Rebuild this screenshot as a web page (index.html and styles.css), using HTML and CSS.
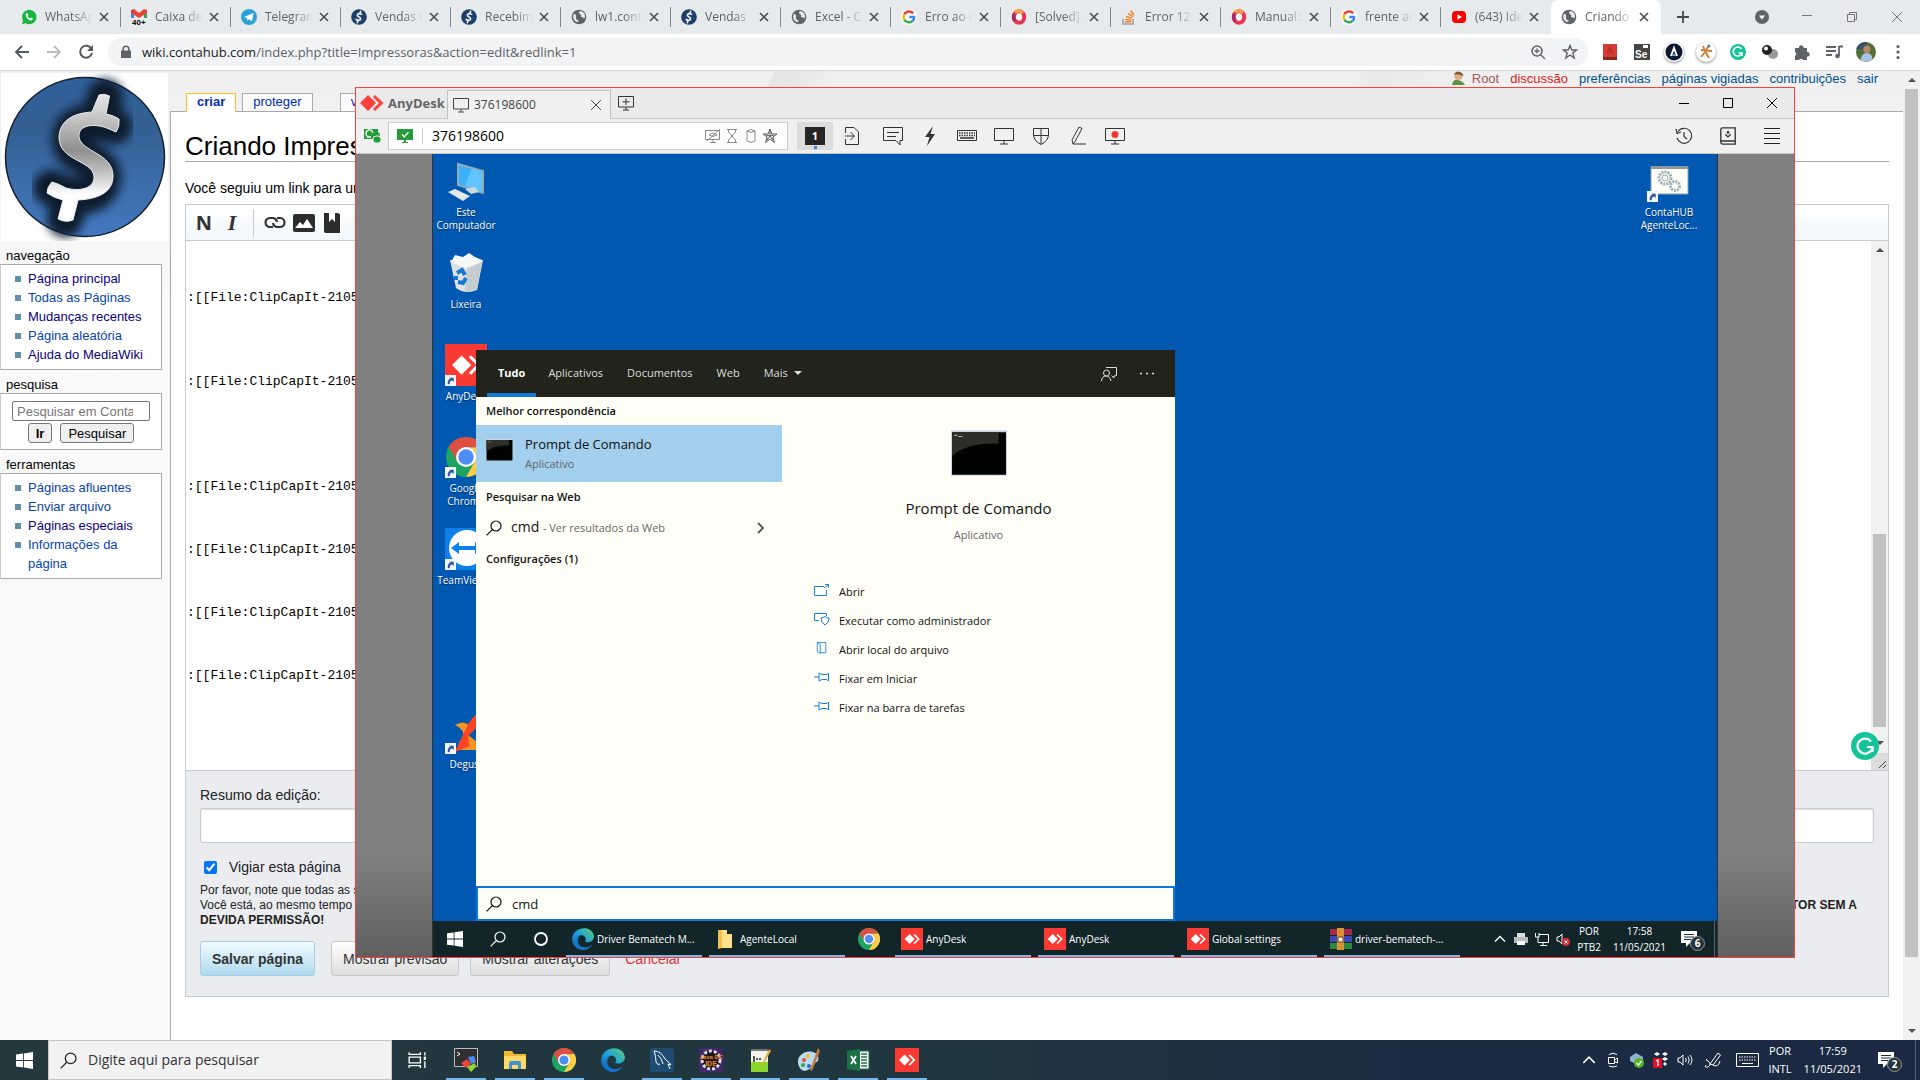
FILE: index.html
```html
<!DOCTYPE html>
<html lang="pt-BR">
<head>
<meta charset="utf-8">
<title>Criando Impressoras</title>
<link rel="stylesheet" href="styles.css">
</head>
<body>
<svg class="sprite" aria-hidden="true">
  <defs>
    <linearGradient id="coin" x1="0" y1="0" x2="0" y2="1"><stop offset="0" stop-color="#31609b"/><stop offset=".3" stop-color="#335f92"/><stop offset="1" stop-color="#4479bf"/></linearGradient>
    <linearGradient id="silver" gradientUnits="userSpaceOnUse" x1="0" y1="20" x2="0" y2="150"><stop offset="0" stop-color="#e8e8e8"/><stop offset=".2" stop-color="#c4c4c4"/><stop offset=".44" stop-color="#8f8f8f"/><stop offset=".62" stop-color="#c4c4c4"/><stop offset=".78" stop-color="#fff"/></linearGradient>
    <linearGradient id="edgeg" x1="0" y1="1" x2="1" y2="0"><stop offset="0" stop-color="#0c59a4"/><stop offset=".5" stop-color="#1b9de2"/><stop offset="1" stop-color="#5ed56b"/></linearGradient>
    <filter id="soft" x="-30%" y="-30%" width="160%" height="160%"><feGaussianBlur stdDeviation="5"/></filter>
  </defs>
  <symbol id="dollar" viewBox="0 0 167 168"><circle cx="84" cy="84" r="79.500" fill="url(#coin)" stroke="#14202e" stroke-width="1.500"/><path d="M113 53C95 47 68 46 69 68C70 88 104 84 102 106C99 127 74 126 50 115M98 44L104 24M71 122L64 146" fill="none" stroke="#0a1a2e" stroke-width="36" stroke-linecap="round" filter="url(#soft)"/><path d="M98 22Q103 20 108.500 23L105 41Q112 42 118 46Q119 53 115 59Q109 56 103 54C88 50 77 54 78 64C80 79 112 80 112 103C112 120 96 126 77 127L72 147Q65 150 57 146L62 127Q53 125 46 120Q46 114 51 109Q58 111 65 115C80 119 94 115 93 103C91 87 58 88 58 64C59 47 73 40 91 39Z" fill="url(#silver)" stroke="#eee" stroke-width="1"/></symbol>
  <symbol id="coinico" viewBox="0 0 16 16"><circle cx="8" cy="8" r="7.8" fill="#1d3f6c"/><path d="M10.6 5.2C9 4 6.3 4.5 6.4 6.3S9.8 8 9.6 9.8S6.8 11.6 5.2 10.5M9 4.6L9.6 2.4M7 11.2L6.4 13.6" fill="none" stroke="#f2f2f2" stroke-width="1.7" stroke-linecap="round"/></symbol>
  <symbol id="wa" viewBox="0 0 16 16"><path d="M1 15.3L2 11.6A7.2 7.2 0 1 1 4.7 14.3Z" fill="#19b53f"/><path d="M5 4.4C3.8 6.8 6.8 11.3 10.7 11.6L12 9.8L10 8.6L9 9.6C7.8 9 7 8 6.6 7L7.4 6L6.4 4Z" fill="#fff"/></symbol>
  <symbol id="gmail" viewBox="0 0 16 16"><path d="M0 1H3V9H0Z" fill="#4285f4"/><path d="M13 1H16V9H13Z" fill="#34a853"/><path d="M0 1L3 0L8 4L13 0L16 1V4L8 9L0 4Z" fill="#ea4335"/><text x="1" y="16" font-size="8" font-family="Liberation Sans" font-weight="700">40+</text></symbol>
  <symbol id="tg" viewBox="0 0 16 16"><circle cx="8" cy="8" r="8" fill="#2aa1da"/><path d="M3 8L12.5 4L11 12.3L8 10.2L6.4 11.6L6 9Z" fill="#fff"/></symbol>
  <symbol id="globe" viewBox="0 0 16 16"><circle cx="8" cy="8" r="7.3" fill="#5f6368"/><path d="M3 4.5Q6 6 5 8T8 12Q6 14 4 12Q1 9 3 4.5M9 2Q7 4 9 5T10 8Q13 8 13 10Q15 7 13 4Q11 2 9 2" fill="#e7eaed"/></symbol>
  <symbol id="google" viewBox="0 0 16 16"><circle cx="8" cy="8" r="8" fill="#fff"/><g fill="none" stroke-width="2.4"><path d="M12.2 4.4A5.4 5.4 0 0 0 3.2 5.6" stroke="#ea4335"/><path d="M3.2 5.6A5.4 5.4 0 0 0 3.3 10.6" stroke="#fbbc05"/><path d="M3.3 10.6A5.4 5.4 0 0 0 11.6 12" stroke="#34a853"/><path d="M11.6 12A5 5 0 0 0 13.2 8H8.2" stroke="#4285f4"/></g></symbol>
  <symbol id="ring" viewBox="0 0 16 16"><ellipse cx="8" cy="8" rx="5.2" ry="5.7" fill="#fff" stroke="#e8344e" stroke-width="4"/><path d="M4 3.5Q8 0 12 4" fill="none" stroke="#f9a13b" stroke-width="3"/><path d="M3 5Q1.500 9 4 12" fill="none" stroke="#a0286c" stroke-width="3"/></symbol>
  <symbol id="so" viewBox="0 0 16 16"><path d="M2 10V15H12V10" fill="none" stroke="#999" stroke-width="1.5"/><path d="M4 12.800H10M4.200 10.300L10.200 11.200M5 7.400L10.800 9.200M7 4.300L12 7.600M9.600 1.500L13 6.300" stroke="#f48024" stroke-width="1.500"/></symbol>
  <symbol id="yt" viewBox="0 0 16 16"><rect x="1" y="2" width="14" height="12" rx="4" fill="#f00"/><path d="M6.500 5.300L11 8L6.500 10.700Z" fill="#fff"/></symbol>
  <symbol id="x" viewBox="0 0 14 14"><path d="M3 3L11 11M11 3L3 11" stroke="currentColor" stroke-width="1.600"/></symbol>
  <symbol id="xthin" viewBox="0 0 14 14"><path d="M2 2L12 12M12 2L2 12" stroke="currentColor" stroke-width="1"/></symbol>
  <symbol id="anyd" viewBox="0 0 24 16"><path d="M0 8L8 0L16 8L8 16Z M13 2L15 0L23.500 8L15 16L13 14L19 8Z" fill="currentColor"/></symbol>
  <symbol id="anyicon" viewBox="0 0 24 24"><path d="M0 0H24V24H0Z" fill="#fb3a34"/><path d="M4 12L9.500 6.500L15 12L9.500 17.500ZM13.500 7.500L15 6.500L20.500 12L15 17.500L13.500 16.500L18 12Z" fill="#fff"/></symbol>
  <symbol id="chrome" viewBox="0 0 24 24"><circle cx="12" cy="12" r="12" fill="#1da462"/><path d="M1.600 6A12 12 0 0 1 22.400 6L12 6.500L7 15Z" fill="#dd4f43"/><path d="M22.400 6A12 12 0 0 1 12 24L17.200 15L17 8.500L12 6.500Z" fill="#ffce44"/><circle cx="12" cy="12" r="6" fill="#fff"/><circle cx="12" cy="12" r="4.600" fill="#4e8cf7"/></symbol>
  <symbol id="edge" viewBox="0 0 24 24"><path d="M0 12C1 -2 22 -4 24 9C24 15 17 17 14 14.500C17 12 14 7 9 8C3 10 5 22 15 24C6 25 0 19 0 12Z" fill="url(#edgeg)"/><path d="M9 9C3 14 8 22 15 21Q20 21 22.500 17C20 22 16 24 12 24C3 23 3 11 9 9Z" fill="#1276cf"/></symbol>
  <symbol id="win" viewBox="0 0 16 16"><path d="M0 2.300L6.700 1.400V7.600H0ZM7.500 1.300L16 0V7.600H7.500ZM0 8.400H6.700V14.600L0 13.700ZM7.500 8.400H16V16L7.500 14.700Z" fill="#fff"/></symbol>
  <symbol id="search" viewBox="0 0 16 16"><circle cx="10" cy="6" r="5" fill="none" stroke="currentColor" stroke-width="1.200"/><path d="M6.300 9.700L.600 15.400" stroke="currentColor" stroke-width="1.200"/></symbol>
  <symbol id="monitor" viewBox="0 0 16 16"><path d="M.500 1.500H15.500V12H.500ZM8 12V15M5 15H11" fill="none" stroke="currentColor"/></symbol>
  <symbol id="shortcut" viewBox="0 0 12 12"><path d="M0 0H12V12H0Z" fill="#f4f6fb"/><path d="M3 10V7Q4 4 6 4L4.500 3H9.500V8L8 6Q5 6 5 10Z" fill="#2a51a3"/></symbol>
  <symbol id="cmd" viewBox="0 0 54 44"><path d="M0 0H54V44H0Z" fill="#cdd3e4"/><path d="M1 2H53V43H1Z" fill="#000300"/><path d="M1 2H46V13Q15 12 1 25Z" fill="#2c2e27"/><path d="M3 5H6M7 6H11" stroke="#aaa"/></symbol>
  <symbol id="folder" viewBox="0 0 24 24"><path d="M1 3H9L11 6H23V21H1Z" fill="#f1b82d"/><path d="M1 8H23V21H1Z" fill="#ffd968"/><path d="M6 21V15Q6 13 8 13H16Q18 13 18 15V21H15V17H9V21Z" fill="#3b94da"/></symbol>
  <symbol id="note" viewBox="0 0 16 16"><path d="M0 0H16V12H9L5 16V12H0Z" fill="#fff"/><path d="M3 3.500H13M3 6H13M3 8.500H10" stroke="#1c2c3c"/></symbol>
  <symbol id="up" viewBox="0 0 14 14"><path d="M2 9.500L7 4.500L12 9.500" fill="none" stroke="currentColor" stroke-width="1.300"/></symbol>
  <symbol id="pin" viewBox="0 0 16 12"><path d="M0 6H5M5 2V10L8 8.500H13L14.500 10V2L13 3.500H8Z" fill="none" stroke="#1580d8"/></symbol>
</svg>

<header class="tabstrip">
  <div class="tab"><svg class="fav"><use href="#wa"/></svg><span>WhatsAp</span><button aria-label="Fechar"><svg><use href="#x"/></svg></button></div>
  <div class="tab"><svg class="fav"><use href="#gmail"/></svg><span>Caixa de</span><button aria-label="Fechar"><svg><use href="#x"/></svg></button></div>
  <div class="tab"><svg class="fav"><use href="#tg"/></svg><span>Telegram</span><button aria-label="Fechar"><svg><use href="#x"/></svg></button></div>
  <div class="tab"><svg class="fav"><use href="#coinico"/></svg><span>Vendas I</span><button aria-label="Fechar"><svg><use href="#x"/></svg></button></div>
  <div class="tab"><svg class="fav"><use href="#coinico"/></svg><span>Recebim</span><button aria-label="Fechar"><svg><use href="#x"/></svg></button></div>
  <div class="tab"><svg class="fav"><use href="#globe"/></svg><span>lw1.conta</span><button aria-label="Fechar"><svg><use href="#x"/></svg></button></div>
  <div class="tab"><svg class="fav"><use href="#coinico"/></svg><span>Vendas -</span><button aria-label="Fechar"><svg><use href="#x"/></svg></button></div>
  <div class="tab"><svg class="fav"><use href="#globe"/></svg><span>Excel - C</span><button aria-label="Fechar"><svg><use href="#x"/></svg></button></div>
  <div class="tab"><svg class="fav"><use href="#google"/></svg><span>Erro ao c</span><button aria-label="Fechar"><svg><use href="#x"/></svg></button></div>
  <div class="tab"><svg class="fav"><use href="#ring"/></svg><span>[Solved]:</span><button aria-label="Fechar"><svg><use href="#x"/></svg></button></div>
  <div class="tab"><svg class="fav"><use href="#so"/></svg><span>Error 126</span><button aria-label="Fechar"><svg><use href="#x"/></svg></button></div>
  <div class="tab"><svg class="fav"><use href="#ring"/></svg><span>Manual:S</span><button aria-label="Fechar"><svg><use href="#x"/></svg></button></div>
  <div class="tab"><svg class="fav"><use href="#google"/></svg><span>frente au</span><button aria-label="Fechar"><svg><use href="#x"/></svg></button></div>
  <div class="tab last"><svg class="fav"><use href="#yt"/></svg><span>(643) Ide</span><button aria-label="Fechar"><svg><use href="#x"/></svg></button></div>
  <div class="tab active"><svg class="fav"><use href="#globe"/></svg><span>Criando</span><button aria-label="Fechar"><svg><use href="#x"/></svg></button></div>
  <button class="newtab" aria-label="Nova guia"><svg viewBox="0 0 14 14"><path d="M7 1V13M1 7H13" stroke="#45494d" stroke-width="1.800"/></svg></button>
  <div class="winctl">
    <svg viewBox="0 0 16 16"><circle cx="8" cy="8" r="7" fill="#5f6368"/><path d="M5 6.500H11L8 10.500Z" fill="#fff"/></svg>
    <svg viewBox="0 0 16 16"><path d="M3 6.500H13" stroke="#777"/></svg>
    <svg viewBox="0 0 16 16"><path d="M3.500 5.500H10.500V12.500H3.500ZM5.500 5V3.500H12.500V10.500H11" fill="none" stroke="#777"/></svg>
    <svg viewBox="0 0 16 16"><path d="M3 3L13 13M13 3L3 13" stroke="#777"/></svg>
  </div>
</header>

<nav class="toolbar">
  <button aria-label="Voltar"><svg viewBox="0 0 16 16"><path d="M15 8H2M8 2L2 8L8 14" fill="none" stroke="#55595d" stroke-width="1.800"/></svg></button>
  <button aria-label="Avançar"><svg viewBox="0 0 16 16"><path d="M1 8H14M8 2L14 8L8 14" fill="none" stroke="#bbb" stroke-width="1.800"/></svg></button>
  <button aria-label="Recarregar"><svg viewBox="0 0 16 16"><path d="M13.500 5A6 6 0 1 0 14 9" fill="none" stroke="#55595d" stroke-width="2"/><path d="M15 1V7H9Z" fill="#55595d"/></svg></button>
  <div class="omnibox">
    <svg viewBox="0 0 12 14"><path d="M3.200 6V4A2.800 2.800 0 0 1 8.800 4V6" fill="none" stroke="#5f6368" stroke-width="1.600"/><path d="M1 5.500H11V13H1Z" fill="#5f6368"/></svg>
    <p>wiki.contahub.com<span>/index.php?title=Impressoras&amp;action=edit&amp;redlink=1</span></p>
    <svg class="om" viewBox="0 0 16 16"><circle cx="7" cy="7" r="5" fill="none" stroke="#5f6368" stroke-width="1.500"/><path d="M10.500 10.500L15 15M4.500 7H9.500M7 4.500V9.500" stroke="#5f6368" stroke-width="1.300"/></svg>
    <svg class="om" viewBox="0 0 16 16"><path d="M8 1.500L9.800 6H14.500L10.800 9L12.200 14L8 11L3.800 14L5.200 9L1.500 6H6.200Z" fill="none" stroke="#5f6368" stroke-width="1.400"/></svg>
  </div>
  <div class="exts">
    <svg viewBox="0 0 20 20"><path d="M3 2H17V18H3Z" fill="#d93a33"/><path d="M3 15H17V18H3Z" fill="#8e2521"/><path d="M7 12L10 5L13 12M8 10H12" fill="none" stroke="#b52e29" stroke-width="1.500"/></svg>
    <svg viewBox="0 0 20 20"><path d="M2 2H18V18H2Z" fill="#464646"/><path d="M11 3H16V6H11Z" fill="#fff"/><text x="3" y="16" font-size="10" font-weight="700" fill="#fff" font-family="Liberation Sans">Se</text></svg>
    <svg viewBox="0 0 20 20" class="halo"><circle cx="10" cy="10" r="8.500" fill="#0f1630"/><path d="M7 14L10 6L13 14" fill="none" stroke="#fff" stroke-width="2"/><path d="M8 13H12" stroke="#4ea7e8" stroke-width="2"/></svg>
    <svg viewBox="0 0 20 20" class="halo"><path d="M13 3L9 10L5 15M5 8L16 9M9 9L13 16M7 4L9 9" fill="none" stroke="#c97c33" stroke-width="1.800"/><circle cx="13" cy="4" r="1.500" fill="#5a7fb5"/></svg>
    <svg viewBox="0 0 20 20"><circle cx="10" cy="10" r="8" fill="#15c39a"/><path d="M13.500 7A4.500 4.500 0 1 0 14 11H10.500M14 11V14" fill="none" stroke="#fff" stroke-width="1.600"/></svg>
    <svg viewBox="0 0 20 20"><circle cx="13" cy="12" r="5" fill="#999"/><circle cx="7" cy="8" r="5" fill="#222"/><circle cx="6" cy="6.500" r="2" fill="#fff"/></svg>
    <svg viewBox="0 0 20 20"><path d="M3 6H7A2.300 2.300 0 1 1 11.500 6H15V10A2.300 2.300 0 1 1 15 14.500V18H11A2.300 2.300 0 0 0 7 18H3V14A2.300 2.300 0 0 0 3 10Z" fill="#5f6368"/></svg>
    <svg viewBox="0 0 20 20"><path d="M2 5H12M2 9H12M2 13H8M15 4V14M15 4.500H19" fill="none" stroke="#5f6368" stroke-width="1.800"/><circle cx="13.500" cy="14" r="2.300" fill="#5f6368"/></svg>
    <svg viewBox="0 0 22 22" class="avatar"><circle cx="11" cy="11" r="11" fill="#53703a"/><path d="M0 8A11 11 0 0 1 12 0L9 8Z" fill="#39506e"/><circle cx="12" cy="8" r="4" fill="#b98768"/><path d="M5 20Q6 12 12 12T18 19Q12 24 5 20" fill="#a9c4e8"/></svg>
    <svg viewBox="0 0 20 20"><circle cx="10" cy="4.500" r="1.600" fill="#5f6368"/><circle cx="10" cy="10" r="1.600" fill="#5f6368"/><circle cx="10" cy="15.500" r="1.600" fill="#5f6368"/></svg>
  </div>
</nav>

<main class="page">
  <aside class="side">
    <a href="#" class="logo" aria-label="Página principal"><svg><use href="#dollar"/></svg></a>
    <h3>navegação</h3>
    <ul>
      <li><a class="seen" href="#">Página principal</a></li>
      <li><a href="#">Todas as Páginas</a></li>
      <li><a class="seen" href="#">Mudanças recentes</a></li>
      <li><a href="#">Página aleatória</a></li>
      <li><a class="seen" href="#">Ajuda do MediaWiki</a></li>
    </ul>
    <h3><label for="q">pesquisa</label></h3>
    <form class="find"><input id="q" placeholder="Pesquisar em Conta"><div><button type="button"><b>Ir</b></button><button type="button">Pesquisar</button></div></form>
    <h3>ferramentas</h3>
    <ul>
      <li><a href="#">Páginas afluentes</a></li>
      <li><a href="#">Enviar arquivo</a></li>
      <li><a class="seen" href="#">Páginas especiais</a></li>
      <li><a href="#">Informações da página</a></li>
    </ul>
  </aside>

  <section class="col">
    <div class="colhead">
      <div class="ptabs"><a href="#" class="sel">criar</a><a href="#">proteger</a><a href="#" class="far">vigiar</a></div>
      <div class="personal">
        <svg viewBox="0 0 13 15"><path d="M0 14Q1 8 6 9T13 14Z" fill="#5b9440"/><circle cx="6.500" cy="5" r="4" fill="#e0b083"/><path d="M2 4Q4 -1 8 1T11 5Q6 2 2 4" fill="#7a5a32"/></svg>
        <a href="#" class="root">Root</a><a href="#" class="new">discussão</a><a href="#">preferências</a><a href="#">páginas vigiadas</a><a href="#">contribuições</a><a href="#">sair</a>
      </div>
    </div>
    <article class="content">
      <h1>Criando Impressoras</h1>
      <p class="intro">Você seguiu um link para uma</p>
      <div class="editor">
        <div class="edbar">
          <button class="bold" aria-label="Negrito">N</button><button class="ital" aria-label="Itálico">I</button><i class="sep"></i>
          <svg viewBox="0 0 22 20"><path d="M9 14H6A4.500 4.500 0 0 1 6 5H9A4.500 4.500 0 0 1 13 9M13 5H16A4.500 4.500 0 0 1 16 14H13A4.500 4.500 0 0 1 9 10" fill="none" stroke="#333" stroke-width="2.200"/></svg>
          <svg viewBox="0 0 22 20"><rect y="1" width="22" height="18" rx="2" fill="#2d2d2d"/><path d="M2 15L7 9L10 12L14 6L20 15Z" fill="#fff"/></svg>
          <svg viewBox="0 0 22 20"><path d="M2 0Q3 0 7 0V9L10 6L13 9V0H15Q18 0 18 2V20H4Q2 20 2 18Z" fill="#2d2d2d"/></svg>
        </div>
        <div class="area">
          <textarea rows="25" aria-label="Texto da página">


:[[File:ClipCapIt-2105



:[[File:ClipCapIt-2105




:[[File:ClipCapIt-2105


:[[File:ClipCapIt-2105


:[[File:ClipCapIt-2105


:[[File:ClipCapIt-2105


</textarea>
          <div class="scroll inner"><i class="ar up"></i><i class="thumb"></i><i class="ar dn"></i><svg viewBox="0 0 17 17"><path d="M0 0H17V17H0Z" fill="#dcdcdc"/><path d="M8 15L15 8M12 15L15 12" stroke="#444"/></svg></div>
          <svg class="gram" viewBox="0 0 28 28"><circle cx="14" cy="14" r="14" fill="#15c39a"/><path d="M20 9.500A7.500 7.500 0 1 0 21.500 15H16M21.500 15V20" fill="none" stroke="#fff" stroke-width="2.200"/></svg>
        </div>
        <div class="options">
          <label for="sum">Resumo da edição:</label>
          <input id="sum" class="sum">
          <label class="watch"><input type="checkbox" checked>Vigiar esta página</label>
          <div class="legal">
            <p>Por favor, note que todas as suas</p>
            <p class="spread"><span>Você está, ao mesmo tempo</span><b>TOR SEM A</b></p>
            <p><b>DEVIDA PERMISSÃO!</b></p>
          </div>
          <div class="acts"><button class="save">Salvar página</button><button class="second">Mostrar previsão</button><button>Mostrar alterações</button><a href="#">Cancelar</a></div>
        </div>
      </div>
    </article>
  </section>
  <div class="scroll outer"><i class="ar up"></i><i class="thumb"></i><i class="ar dn"></i></div>

  <section class="anydesk" aria-label="AnyDesk">
    <div class="adtitle">
      <div class="brand"><svg><use href="#anyd"/></svg><b>AnyDesk</b></div>
      <div class="adtab"><svg><use href="#monitor"/></svg><span>376198600</span><button aria-label="Fechar sessão"><svg><use href="#xthin"/></svg></button></div>
      <button class="adnew" aria-label="Nova sessão"><svg viewBox="0 0 16 16"><path d="M.500 1.500H15.500V12H.500ZM8 12V15M5 15H11M8 3.500V10M4.500 6.800H11.500" fill="none" stroke="#333"/></svg></button>
      <div class="adctl">
        <button aria-label="Minimizar"><svg viewBox="0 0 14 14"><path d="M2 7.500H12" stroke="#000"/></svg></button>
        <button aria-label="Maximizar"><svg viewBox="0 0 14 14"><path d="M2.500 2.500H11.500V11.500H2.500Z" fill="none" stroke="#000"/></svg></button>
        <button aria-label="Fechar"><svg><use href="#xthin"/></svg></button>
      </div>
    </div>
    <div class="adbar">
      <svg class="lock" viewBox="0 0 18 16"><path d="M0 1H14V11H0Z" fill="#259b3e"/><path d="M3 8A3 3 0 0 1 8 3L9 5M7 9L3 9" fill="none" stroke="#fff" stroke-width="1.300"/><rect x="9" y="8" width="8" height="7" rx="3" fill="#259b3e" stroke="#eee"/><path d="M11 8V6Q13 3 15 6V8" fill="none" stroke="#259b3e" stroke-width="1.500"/></svg>
      <div class="addr">
        <svg viewBox="0 0 16 16"><path d="M0 1H16V12H0ZM7 12H9V14H11V15H5V14H7Z" fill="#259b3e"/><path d="M5 6.500L7.200 8.700L11.500 4.300" fill="none" stroke="#fff" stroke-width="1.400"/></svg>
        <i></i><input value="376198600" aria-label="Endereço remoto">
        <svg viewBox="0 0 16 16"><path d="M.500 2.500H14.500V11.500H.500ZM8 12V14M5 14.500H11M2 13L15 1M4 7Q8 3 12 7Q8 10 4 7" fill="none" stroke="#888"/></svg>
        <svg viewBox="0 0 16 16"><path d="M3 1.500H13M3 14.500H13M4.500 2V4L8 8L11.500 4V2M4.500 14V12L8 8L11.500 12V14" fill="none" stroke="#888"/></svg>
        <svg viewBox="0 0 16 16"><path d="M4 3Q8 0 12 3V13Q8 16 4 13ZM4 3Q8 6 12 3" fill="none" stroke="#888"/></svg>
        <svg viewBox="0 0 16 16"><path d="M8 1L9.800 6H15L10.800 9L12.400 14.500L8 11L3.600 14.500L5.200 9L1 6H6.200ZM8 8V3M8 8L12 7M8 8L11 12M8 8L5 12M8 8L4 7" fill="none" stroke="#555"/></svg>
      </div>
      <div class="adtools">
        <button class="on">1</button>
        <button aria-label="Arquivos"><svg viewBox="0 0 20 20"><path d="M3.500 7V1.500H12L16.500 6V18.500H3.500V13M3 10H12M8.500 6L12.500 10L8.500 14" fill="none" stroke="#333"/></svg></button>
        <button class="chat" aria-label="Chat"><svg viewBox="0 0 20 20"><path d="M.500 1.500H19.500V14.500H17V19L13 14.500H.500ZM4 6.500H16M4 10.500H13" fill="none" stroke="#333"/></svg></button>
        <button aria-label="Ações"><svg viewBox="0 0 20 20"><path d="M13 0L5 11H9.500L7 20L15 8H10.500Z" fill="#333"/></svg></button>
        <button aria-label="Teclado"><svg viewBox="0 0 20 20"><path d="M.500 4.500H19.500V14.500H.500Z" fill="none" stroke="#333"/><path d="M2 7H18M2 9.500H18" stroke="#333" stroke-width="1.500" stroke-dasharray="1.500 1"/><path d="M3 12H17" stroke="#333" stroke-width="1.500"/></svg></button>
        <button aria-label="Tela"><svg viewBox="0 0 20 20"><path d="M.500 2.500H19.500V14.500H.500ZM10 14.500V18M6 18H14" fill="none" stroke="#333"/></svg></button>
        <button aria-label="Permissões"><svg viewBox="0 0 20 20"><path d="M2.500 2.500H17.500V9Q17 15 10 18.500Q3 15 2.500 9ZM10 2.500V18M2.500 9.500H17.500" fill="none" stroke="#333"/></svg></button>
        <button aria-label="Quadro"><svg viewBox="0 0 20 20"><path d="M5 18L4 14L11 1L14 2.500L7 15.500ZM5 18H18" fill="none" stroke="#333"/></svg></button>
        <button aria-label="Gravar"><svg viewBox="0 0 20 20"><path d="M.500 2.500H19.500V14.500H.500ZM10 14.500V18M6 18H14" fill="none" stroke="#333"/><circle cx="10" cy="8.500" r="3.500" fill="#ea3a35"/></svg></button>
      </div>
      <div class="adctl">
        <button aria-label="Histórico"><svg viewBox="0 0 18 18"><path d="M3 4.500A7.500 7.500 0 1 1 2 11M1 2L2 6.500L6 5M9 5V9.500L12 12" fill="none" stroke="#333" stroke-width="1.200"/></svg></button>
        <button aria-label="Agenda"><svg viewBox="0 0 18 20"><path d="M3 1H17V19H3Q1 19 1 17V3Q1 1 3 1M1 15.500H17M6 8L9 11L12 8" fill="none" stroke="#333" stroke-width="1.500"/><circle cx="9" cy="6" r="1.500" fill="#333"/></svg></button>
        <button aria-label="Menu"><svg viewBox="0 0 18 18"><path d="M1 1.500H17M1 6.500H17M1 11.500H17M1 16.500H17" stroke="#222"/></svg></button>
      </div>
    </div>
    <div class="stage">
      <div class="remote">
        <div class="desk">
          <div class="icons">
            <div class="ico"><svg viewBox="0 0 42 42"><path d="M13 4L38 11V33L13 25Z" fill="#3bb0fb" stroke="#93a9b8" stroke-width="2"/><path d="M27 8L37 12V32L20 26Z" fill="#62c5ff"/><path d="M3 32L10 29L25 36L18 41Z" fill="#e3e8ea"/><path d="M20 29L30 27L34 32L26 34Z" fill="#cdd8dc"/></svg><span>Este Computador</span></div>
            <div class="ico"><svg viewBox="0 0 42 42"><path d="M5 8L38 8L32 38Q20 43 11 36Z" fill="#dfe3e4"/><path d="M6 10L10 3L18 5L24 1L30 5L37 8L33 14L20 16Z" fill="#f6f7f7"/><path d="M22 16L20 40L32 37L37 10Z" fill="#c5cdd0"/><path d="M12 21L17 18L20 23M21 26L18 31L13 30M11 28L11 24" fill="none" stroke="#1678d2" stroke-width="4"/></svg><span>Lixeira</span></div>
            <div class="ico"><svg viewBox="0 0 42 42"><use href="#anyicon"/></svg><svg class="sc"><use href="#shortcut"/></svg><span>AnyDesk</span></div>
            <div class="ico"><svg viewBox="0 0 42 42"><use href="#chrome" x="1" y="1" width="40" height="40"/></svg><svg class="sc"><use href="#shortcut"/></svg><span>Google Chrome</span></div>
            <div class="ico"><svg viewBox="0 0 42 42"><path d="M0 0H42V42H0Z" fill="#0d7fe8"/><circle cx="22" cy="20" r="18" fill="#fff"/><path d="M6 20L14 14V18H30V14L38 20L30 26V22H14V26Z" fill="#0d7fe8"/></svg><svg class="sc"><use href="#shortcut"/></svg><span>TeamViewer</span></div>
            <div class="ico"></div>
            <div class="ico"><svg viewBox="0 0 42 42"><path d="M10 13Q18 8 24 13L22 22Q32 30 42 38H14Q20 28 18 20Q15 15 10 13" fill="#f79320"/><path d="M34 0Q24 8 21 17Q14 30 10 40L25 34Q22 28 24 23Q34 16 36 0Z" fill="#fb4523"/></svg><svg class="sc"><use href="#shortcut"/></svg><span>Degust</span></div>
          </div>
          <div class="icons right">
            <div class="ico"><svg viewBox="0 0 42 42"><path d="M3 7H40V34H3Z" fill="#fdfdf8" stroke="#8da0aa"/><path d="M3 6H40V9H3Z" fill="#8e999f"/><g fill="none" stroke="#9fb0b4"><circle cx="17" cy="18" r="6" stroke-width="3" stroke-dasharray="2 1"/><circle cx="17" cy="18" r="3"/><circle cx="27" cy="26" r="4.500" stroke-width="3" stroke-dasharray="2 1"/></g></svg><svg class="sc"><use href="#shortcut"/></svg><span>ContaHUB AgenteLoc...</span></div>
          </div>
          <div class="start">
            <div class="sthead">
              <a href="#" class="cur">Tudo</a><a href="#">Aplicativos</a><a href="#">Documentos</a><a href="#">Web</a><a href="#">Mais <i></i></a>
              <svg class="fb" viewBox="0 0 16 16"><path d="M5 1.500H15.500V9.500L13 10V12L10.500 9.500M.500 15Q1 10 5 10T10 15" fill="none" stroke="#ddd"/><circle cx="5.500" cy="7" r="3" fill="none" stroke="#ddd"/></svg>
              <svg viewBox="0 0 16 16"><path d="M1 7.500H3M7 7.500H9M13 7.500H15" stroke="#ddd" stroke-width="1.500"/></svg>
            </div>
            <div class="stbody">
              <div class="res">
                <h4>Melhor correspondência</h4>
                <div class="hit"><svg><use href="#cmd"/></svg><div><p>Prompt de Comando</p><small>Aplicativo</small></div></div>
                <h4 class="web">Pesquisar na Web</h4>
                <div class="webrow"><svg><use href="#search"/></svg><p>cmd <small>- Ver resultados da Web</small></p><svg class="chev" viewBox="0 0 12 12"><path d="M4 1L9 6L4 11" fill="none" stroke="#555" stroke-width="1.800"/></svg></div>
                <h4>Configurações (1)</h4>
              </div>
              <div class="detail">
                <svg class="big"><use href="#cmd"/></svg>
                <h2>Prompt de Comando</h2><small>Aplicativo</small>
                <ul>
                  <li><svg viewBox="0 0 16 12"><path d="M10 2.500H.500V11.500H12.500V6M10 4L14.500 .500M11 .500H14.500V4" fill="none" stroke="#1580d8"/></svg>Abrir</li>
                  <li><svg viewBox="0 0 16 12"><path d="M5 7.500H.500V.500H12.500V3M7 5Q9 5 11 3.500Q13 5 15 5Q15 10 11 12Q7 10 7 5" fill="none" stroke="#1580d8"/></svg>Executar como administrador</li>
                  <li><svg viewBox="0 0 16 14"><path d="M2.500 .500H12.500V12.500H6M2.500 .500L6 3V13.500L2.500 11Z" fill="none" stroke="#1580d8"/></svg>Abrir local do arquivo</li>
                  <li><svg><use href="#pin"/></svg>Fixar em Iniciar</li>
                  <li><svg><use href="#pin"/></svg>Fixar na barra de tarefas</li>
                </ul>
              </div>
            </div>
            <div class="stsearch"><svg><use href="#search"/></svg><input value="cmd" aria-label="Pesquisar"></div>
          </div>
        </div>
        <div class="rbar">
          <span class="rb"><svg><use href="#win"/></svg></span><span class="rb"><svg><use href="#search"/></svg></span><span class="rb"><svg viewBox="0 0 16 16"><circle cx="8" cy="8" r="6" fill="none" stroke="#fff" stroke-width="1.800"/></svg></span>
          <div class="task run"><svg><use href="#edge"/></svg>Driver Bematech M...</div>
          <div class="task run"><svg viewBox="0 0 22 22"><path d="M3 2H12V6H17V20H3Z" fill="#ffe08a"/><path d="M3 2H7V20L3 21Z" fill="#f2c14a"/></svg>AgenteLocal</div>
          <div class="solo"><svg><use href="#chrome"/></svg></div>
          <div class="task run"><svg><use href="#anyicon"/></svg>AnyDesk</div>
          <div class="task run"><svg><use href="#anyicon"/></svg>AnyDesk</div>
          <div class="task run"><svg><use href="#anyicon"/></svg>Global settings</div>
          <div class="task run"><svg viewBox="0 0 22 22"><path d="M0 1H22V7H0Z" fill="#a8284c"/><path d="M0 8H22V14H0Z" fill="#3a49b5"/><path d="M0 15H22V21H0Z" fill="#2e8a3b"/><path d="M7 0H14V22H7Z" fill="#d8932e"/><path d="M8 9H13V14H8Z" fill="#eee" stroke="#6b4210"/></svg>driver-bematech-...</div>
          <div class="rtray">
            <svg><use href="#up"/></svg>
            <svg viewBox="0 0 14 14"><path d="M3 1H11V5H3Z" fill="#ddd"/><path d="M0 5H14V11H0Z" fill="#b8bcbe"/><path d="M3 9H11V13H3Z" fill="#fff"/></svg>
            <svg viewBox="0 0 14 14"><path d="M4 2.500H13.500V10.500H3V5M8 10.500V13M5 13.500H12M.500 1V5H4V1" fill="none" stroke="#fff"/></svg>
            <svg viewBox="0 0 14 14"><path d="M1 5H3L6 2V12L3 9H1Z" fill="none" stroke="#fff"/><circle cx="10" cy="10" r="4" fill="#d32f3b"/><path d="M8.500 8.500L11.500 11.500M11.500 8.500L8.500 11.500" stroke="#fff"/></svg>
            <p>POR<br>PTB2</p><p>17:58<br>11/05/2021</p>
            <span class="notif"><svg><use href="#note"/></svg><b>6</b></span>
          </div>
        </div>
      </div>
    </div>
  </section>
</main>

<footer class="taskbar">
  <button class="startbtn" aria-label="Iniciar"><svg><use href="#win"/></svg></button>
  <div class="hsearch"><svg><use href="#search"/></svg><input placeholder="Digite aqui para pesquisar" aria-label="Pesquisar"></div>
  <div class="apps">
    <span class="app"><svg class="sm" viewBox="0 0 16 16"><path d="M1 1V3H11V1M1 15V13H11V15M1 5.500H11V10.500H1ZM15 1V4M15 9V15" fill="none" stroke="#fff" stroke-width="1.200"/><path d="M14 5H16V8H14Z" fill="#fff"/></svg></span>
    <span class="app run"><svg viewBox="0 0 24 24"><path d="M.500 .500H23.500V18.500H.500Z" fill="#302f31" stroke="#bbb"/><path d="M3 4L6 6L3 8" fill="none" stroke="#fff"/><path d="M7 15L13 11L17 16L12 20Z" fill="#ea4440"/><path d="M14 9L20 8L22 14L17 16Z" fill="#4b8df0"/><path d="M13 19L21 15L22 19L17 24Z" fill="#93d42d"/></svg></span>
    <span class="app run"><svg><use href="#folder"/></svg></span>
    <span class="app run"><svg><use href="#chrome"/></svg></span>
    <span class="app"><svg><use href="#edge"/></svg></span>
    <span class="app run"><svg viewBox="0 0 24 24"><rect width="24" height="24" rx="3" fill="#1f4c73"/><path d="M4 3Q11 3 15 11Q20 15 21 17L18 16L20 21M4 3Q6 8 6 14Q8 18 10 16M8 7Q12 11 13 16" fill="none" stroke="#fff"/></svg></span>
    <span class="app run"><svg viewBox="0 0 24 24"><path d="M0 0H24V24H0Z" fill="#43286b"/><circle cx="12" cy="12" r="9" fill="#1b1722" stroke="#ddd" stroke-width="3" stroke-dasharray="3 2"/><text x="12" y="11" text-anchor="middle" font-size="6" font-weight="700" fill="#f28a1c" font-family="Liberation Sans">Java EE</text><text x="12" y="18" text-anchor="middle" font-size="7" font-weight="700" fill="#f28a1c" font-family="Liberation Sans">IDE</text></svg></span>
    <span class="app run"><svg viewBox="0 0 24 24"><path d="M3 1H20V24H3Z" fill="#f4f6ee"/><path d="M3 14H20V24H3Z" fill="#8bd62c"/><path d="M3 1H20V3H3Z" fill="#777"/><path d="M6 8V14M8 11H10M11 11H13" stroke="#222" stroke-width="1.500"/><path d="M21 1L23 3L15 17L13 18Z" fill="#e7ad38"/></svg></span>
    <span class="app run"><svg viewBox="0 0 24 24"><path d="M1 15C0 7 9 2 16 4Q23 6 21 13Q18 14 17 17T8 23Q2 22 1 15Z" fill="#b9dcf0"/><circle cx="7" cy="12" r="2" fill="#e64b3b"/><circle cx="11" cy="8" r="2" fill="#f4ba32"/><circle cx="6" cy="17" r="2" fill="#3c9e46"/><circle cx="12" cy="18" r="2" fill="#3465c5"/><path d="M21 0L23 3L15 23L13 22Z" fill="#c77a3a"/></svg></span>
    <span class="app run"><svg viewBox="0 0 24 24"><path d="M13 3H23V21H13Z" fill="#fff" stroke="#1e7145"/><path d="M15 6H21M15 9H21M15 12H21M15 15H21M15 18H21" stroke="#1e7145" stroke-width="1.500"/><path d="M1 3L14 1V23L1 21Z" fill="#1e7145"/><path d="M5 8L10 16M10 8L5 16" stroke="#fff" stroke-width="1.800"/></svg></span>
    <span class="app run"><svg><use href="#anyicon"/></svg></span>
  </div>
  <div class="htray">
    <svg><use href="#up"/></svg>
    <svg viewBox="0 0 16 16"><path d="M3.500 5.500H9.500V11.500H3.500ZM9.500 8L12.500 6V11L9.500 9.500M4 2.500Q8 0 12 2.500M4 14Q8 16 12 14" fill="none" stroke="#fff"/></svg>
    <svg viewBox="0 0 16 16"><path d="M1 5L7 1L14 5V9L7 12L1 9Z" fill="#8fb3d4"/><circle cx="10" cy="11" r="5" fill="#54b522"/><path d="M7.500 11L9.500 13L12.500 9" fill="none" stroke="#fff" stroke-width="1.300"/></svg>
    <svg viewBox="0 0 16 16"><path d="M4 0L7 2L4 4L1 2ZM12 0L15 2L12 4L9 2ZM12 5L15 7L12 9L9 7ZM12 10L14 12L12 14L10 12Z" fill="#fff"/><path d="M0 6H9V16H0Z" fill="#e0102c"/><path d="M3 9L5 8V14" fill="none" stroke="#fff" stroke-width="1.300"/></svg>
    <svg viewBox="0 0 16 16"><path d="M1 6H3L6 3V13L3 10H1ZM8.500 6Q10 8 8.500 10M11 4.500Q13.500 8 11 11.500M13 3Q17 8 13 13" fill="none" stroke="#fff"/></svg>
    <svg class="w" viewBox="0 0 18 18"><path d="M2 14Q0 17 4 16Q8 13 4 10Q1 9 3 8M6 13L14 2L16.500 4L9 14ZM9 14Q14 17 16 10" fill="none" stroke="#fff"/></svg>
    <svg class="kb" viewBox="0 0 23 14"><path d="M.500 .500H22.500V13.500H.500Z" fill="none" stroke="#fff"/><path d="M3 4H20M3 7H20" stroke="#fff" stroke-dasharray="1.500 1"/><path d="M6 10.500H17" stroke="#fff"/></svg>
    <p>POR<br>INTL</p><p>17:59<br>11/05/2021</p>
    <span class="notif"><svg><use href="#note"/></svg><b>2</b></span>
  </div>
</footer>
</body>
</html>
```
FILE: styles.css
```css
* { box-sizing: border-box; }
html, body { height: 100%; margin: 0; }
body { display: flex; flex-direction: column; overflow: hidden; font: 14px/20px "Liberation Sans", Arial, sans-serif; color: #000; background: #fff; }
h1, h2, h3, h4, p, ul { margin: 0; padding: 0; font-weight: 400; }
ul { list-style: none; }
svg { display: block; flex: none; }
a { color: #0645ad; text-decoration: none; }
button { margin: 0; padding: 0; border: 0; background: none; color: inherit; font: inherit; display: flex; align-items: center; justify-content: center; flex: none; }
input, textarea { font: inherit; color: inherit; outline: 0; }
.sprite { position: absolute; width: 0; height: 0; }

/* browser */
.tabstrip, .toolbar { flex: none; display: flex; align-items: center; font-family: "Open Sans", "Noto Sans", sans-serif; }
.tabstrip { height: 34px; padding-left: 11px; background: #e7eaed; font-size: 12px; color: #5f6368; }
.tab { position: relative; flex: 0 1 110px; height: 34px; display: flex; align-items: center; padding-left: 10px; }
.tab::after { content: ""; position: absolute; right: 0; width: 1px; height: 20px; background: #84888c; }
.tab.last::after, .tab.active::after { display: none; }
.tab.active { background: #fff; border-radius: 8px 8px 0 0; }
.tab span { width: 48px; margin-left: 8px; overflow: hidden; white-space: nowrap; mask-image: linear-gradient(90deg, #000 60%, transparent); }
.tab button { margin-left: 4px; color: #4b4f53; }
.tab button svg { width: 14px; height: 14px; }
.fav { width: 16px; height: 16px; }
.newtab { margin-left: 15px; }
.newtab svg { width: 14px; height: 14px; }
.winctl { margin-left: auto; margin-right: 15px; display: flex; gap: 29px; }
.winctl svg { width: 16px; height: 16px; }
.toolbar { height: 37px; padding: 0 12px 0 14px; gap: 16px; border-bottom: 1px solid #d5d7da; background: #fff; }
.toolbar button svg { width: 16px; height: 16px; }
.omnibox { flex: 1; height: 28px; margin-left: -2px; padding: 0 10px 0 12px; display: flex; align-items: center; gap: 16px; border-radius: 14px; background: #f1f3f4; color: #202124; }
.omnibox > svg:first-child { width: 12px; height: 14px; margin-right: -6px; }
.omnibox p { flex: 1; font-size: 13px; }
.omnibox span { color: #5f6368; }
.om { width: 16px; height: 16px; }
.exts { display: flex; align-items: center; gap: 12px; margin-left: -4px; }
.exts svg { width: 20px; height: 20px; }
.exts .halo { border-radius: 50%; box-shadow: 0 1px 3px #888; }

/* wiki page */
.page { position: relative; flex: 1; min-height: 0; display: flex; background: linear-gradient(115deg, transparent 40%, #e6e6e6 40% 41%, transparent 43% 70%, #e9e9e9 71%, transparent 76%) 0 0 / 100% 40px no-repeat, linear-gradient(#efefef, #f9f9f9 240px); }
.side { width: 170px; flex: none; padding-top: 2px; font-size: 13px; line-height: 19px; }
.logo { display: block; width: 167px; height: 168px; margin: 0 0 7px 1px; background: #fff; }
.logo svg { width: 167px; height: 168px; }
.side h3 { margin-left: 6px; font-size: 13px; line-height: 16px; }
.side ul, .find { width: 162px; margin-bottom: 7px; border: 1px solid #aaa; border-left-color: #ccc; background: #fff; }
.side ul { padding: 4px 8px 5px 27px; }
.side li { position: relative; }
.side li::before { content: ""; position: absolute; left: -13px; top: 7px; width: 6px; height: 6px; background: #648fa3; }
.seen { color: #0b0080; }
.find { padding: 7px 11px 6px; }
.find input { display: block; width: 138px; height: 20px; padding: 0 16px 0 4px; border: 1px solid #767676; border-radius: 2px; }
.find div { display: flex; justify-content: center; gap: 8px; margin-top: 2px; }
.find button { height: 20px; padding: 0 7px; border: 1px solid #767676; border-radius: 3px; background: #efefef; }
.col { flex: 1; min-width: 0; display: flex; flex-direction: column; }
.colhead { height: 40px; flex: none; display: flex; justify-content: space-between; font-size: 13px; }
.ptabs { display: flex; align-self: flex-end; gap: 6px; padding-left: 16px; }
.ptabs a { height: 18px; padding: 0 10px; line-height: 15px; border: 1px solid #aaa; border-bottom: 0; background: #fbfbfb; color: #002bb8; }
.ptabs .sel { height: 19px; margin-bottom: -1px; border-color: #fabd23; background: #fff; font-weight: 700; z-index: 1; }
.ptabs .far { margin-left: 21px; }
.personal { display: flex; gap: 11px; padding-right: 25px; line-height: 16px; }
.personal svg { width: 13px; height: 15px; margin-right: -4px; }
.personal a { color: #00518f; }
.personal .root { color: #a55858; }
.personal .new { color: #e02020; }
.content { flex: 1; padding: 20px 14px 0; border: 1px solid #aaa; border-width: 1px 0 0 1px; background: #fff; }
h1 { font-size: 26px; line-height: 29px; border-bottom: 1px solid #a2a9b1; }
.intro { margin: 16px 0 6px; }
.editor { border: 1px solid #c8ccd1; }
.edbar { height: 36px; display: flex; align-items: center; border-bottom: 1px solid #c8ccd1; background: linear-gradient(#fff, #f1f7fb); color: #333; }
.edbar svg { width: 22px; height: 20px; margin-right: 7px; }
.bold { width: 36px; font: 700 20px "Open Sans", sans-serif; }
.ital { width: 20px; font: italic 700 22px "Liberation Serif", serif; }
.sep { width: 1px; height: 28px; margin: 0 10px 0 11px; background: #c8ccd1; }
.area { position: relative; display: flex; border-bottom: 1px solid #c8ccd1; }
textarea { flex: 1; display: block; padding: 4px 1px 0; border: 0; resize: none; overflow: hidden; font: 13px/21px "Liberation Mono", "DejaVu Sans Mono", monospace; }
.gram { position: absolute; right: 9px; bottom: 10px; width: 28px; height: 28px; }
.scroll { width: 17px; flex: none; background: #f1f1f1; display: flex; flex-direction: column; align-items: center; }
.scroll .ar { margin: 7px 0; border: 4px solid transparent; border-width: 0 4px; height: 4px; }
.scroll .up { border-bottom: 4px solid #505050; }
.scroll .dn { border-top: 4px solid #505050; }
.thumb { width: 13px; background: #c1c1c1; }
.outer .thumb { flex: 0 1 868px; margin-bottom: auto; }
.inner .thumb { flex: 0 0 193px; margin-top: auto; }
.inner .dn { margin: 14px 0 8px; }
.inner svg { width: 17px; height: 17px; }
.options { display: flex; flex-direction: column; padding: 14px 14px 20px; background: #eaecf0; color: #222; }
.sum { height: 35px; margin: 3px 0 14px; border: 1px solid #c8ccd1; border-radius: 2px; background: #fff; box-shadow: inset 0 1px 2px #ddd; }
.watch { display: flex; align-items: center; gap: 12px; line-height: 20px; }
.watch input { width: 13px; height: 13px; margin: 0 0 0 4px; accent-color: #0075ff; }
.legal { margin-top: 6px; font-size: 12px; line-height: 15px; }
.spread { display: flex; justify-content: space-between; padding-right: 17px; }
.acts { display: flex; align-items: center; margin-top: 13px; }
.acts button { height: 35px; margin-right: 11px; padding: 0 11px; border: 1px solid #c9c9c9; border-radius: 3px; background: linear-gradient(#fff, #ddd); color: #333; }
.acts .save { margin-right: 16px; border-color: #a6cee1; background: linear-gradient(#f0fbff, #b0daef); font-weight: 700; }
.acts a { margin-left: 4px; color: #d33; }

/* remote session window */
.anydesk { position: absolute; left: 355px; top: 16px; right: 125px; bottom: 82px; display: flex; flex-direction: column; border: 1px solid #f8413a; background: #f0f0f0; font: 12px/16px "Open Sans", "Noto Sans", sans-serif; }
.adtitle { height: 31px; flex: none; display: flex; border-bottom: 1px solid #c6c6c6; background: #eaeaea; }
.brand { width: 91px; display: flex; align-items: center; gap: 4px; padding-left: 4px; color: #666; font-size: 13px; }
.brand svg { width: 24px; height: 16px; color: #fd413a; }
.adtab { width: 164px; height: 29px; margin-top: 2px; padding: 0 7px 0 5px; display: flex; align-items: center; gap: 5px; border: 1px solid #c0c0c0; border-bottom: 0; background: #f0f0f0; color: #444; }
.adtab svg, .adnew svg { width: 16px; height: 16px; }
.adtab button { margin-left: auto; }
.adtab button svg { width: 14px; height: 14px; }
.adnew { width: 29px; }
.adctl { margin-left: auto; display: flex; }
.adctl button { width: 44px; }
.adctl svg { width: 18px; height: 18px; }
.adtitle .adctl svg { width: 14px; height: 14px; }
.adbar { height: 35px; flex: none; display: flex; align-items: center; padding-left: 8px; border-bottom: 1px solid #c6c6c6; }
.lock { width: 18px; height: 16px; }
.addr { width: 400px; height: 28px; margin-left: 6px; padding: 0 9px 0 8px; display: flex; align-items: center; gap: 3px; border: 1px solid #ccc; background: #fff; }
.addr svg { width: 16px; height: 16px; }
.addr i { width: 1px; height: 16px; margin: 0 6px; background: #ccc; }
.addr input { flex: 1; min-width: 0; border: 0; padding: 0; font-size: 14px; }
.adtools { display: flex; margin-left: 9px; }
.adtools button { width: 37px; height: 28px; }
.adtools svg { width: 20px; height: 20px; }
.adtools .chat { margin-left: 4px; }
.adtools .on { width: 36px; font-size: 11px; font-weight: 700; color: #fff; background: linear-gradient(#3f7fe0, #3f7fe0) center bottom 1px / 3px 3px no-repeat, linear-gradient(#252525, #252525) center / 20px 18px no-repeat, #dcdcdc; }
.stage { flex: 1; min-height: 0; display: flex; justify-content: center; padding: 0 76px; background: linear-gradient(#808080 87%, #606060); }
.remote { flex: 1; min-width: 0; display: flex; flex-direction: column; border: 1px solid #333; border-width: 0 1px; }
.desk { position: relative; flex: 1; min-height: 0; display: flex; justify-content: space-between; background: #0058b1; }
.icons { width: 66px; padding-top: 6px; display: grid; grid-auto-rows: 92px; align-content: start; }
.icons.right { width: 96px; }
.ico { position: relative; display: flex; flex-direction: column; align-items: center; overflow: hidden; color: #fff; font-size: 10px; line-height: 13px; text-align: center; text-shadow: 0 1px 1px #002a5c; }
.ico > svg { width: 42px; height: 42px; margin-bottom: 4px; }
.ico .sc { position: absolute; top: 31px; left: 12px; width: 11px; height: 11px; }
.icons.right .sc { left: 26px; }
.icons.right span { width: 66px; }
.start { position: absolute; left: 43px; top: 196px; bottom: 0; width: 699px; display: flex; flex-direction: column; background: #fffff8; font-size: 11px; color: #111; }
.start svg { width: 16px; height: 16px; }
.start small { font-size: 11px; color: #666; }
.sthead { height: 47px; flex: none; display: flex; align-items: center; padding: 0 20px 0 11px; background: #22241c; }
.sthead a { height: 47px; line-height: 46px; padding: 0 12px; color: #ddd; }
.sthead .cur { padding: 0 11px; color: #fff; font-weight: 700; border-bottom: 4px solid #1078d7; }
.sthead i { display: inline-block; margin-left: 3px; border: 4px solid transparent; border-top-color: #ddd; border-bottom: 0; vertical-align: 2px; }
.sthead .fb { margin: 0 22px 0 auto; }
.stbody { flex: 1; min-height: 0; display: flex; }
.res { width: 306px; }
.res h4 { margin: 6px 0 6px 10px; font-size: 11px; line-height: 16px; font-weight: 600; }
.hit { height: 57px; display: flex; gap: 12px; align-items: center; padding-left: 10px; background: #a3cfee; }
.hit svg { width: 27px; height: 22px; margin-bottom: 7px; }
.hit p { font-size: 13px; line-height: 20px; }
.hit small { display: block; line-height: 20px; }
.res .web { margin: 7px 0 14px 10px; }
.webrow { display: flex; align-items: center; gap: 9px; padding: 0 16px 0 10px; margin-bottom: 15px; }
.webrow p { font-size: 14px; }
.webrow .chev { width: 12px; height: 12px; margin-left: auto; }
.detail { flex: 1; display: flex; flex-direction: column; align-items: center; padding-top: 32px; }
.start .big { width: 56px; height: 48px; }
.detail h2 { margin: 19px 0 7px; font-size: 15px; line-height: 24px; }
.detail ul { align-self: stretch; margin-top: 34px; padding-left: 32px; }
.detail li { display: flex; align-items: center; gap: 9px; height: 29px; }
.detail li svg { width: 16px; height: 12px; margin-bottom: 4px; }
.stsearch { height: 35px; flex: none; display: flex; align-items: center; gap: 10px; padding-left: 8px; border: 2px solid #0c79da; }
.stsearch input { flex: 1; border: 0; padding: 0; background: none; font-size: 13px; }
.rbar { height: 36px; flex: none; display: flex; align-items: stretch; background: #12262a; color: #fff; font-size: 10px; }
.rb { width: 43px; display: flex; align-items: center; justify-content: center; }
.rb svg { width: 16px; height: 16px; }
.rb:nth-child(3) { margin-right: 4px; }
.task { flex: 0 1 136px; margin-right: 7px; padding: 2px 0 0 6px; display: flex; align-items: center; gap: 3px; white-space: nowrap; border-bottom: 2px solid #76b9ed; }
.task svg, .solo svg { width: 22px; height: 22px; }
.solo { width: 34px; margin-right: 9px; display: flex; align-items: center; justify-content: center; }
.rtray, .htray { margin-left: auto; display: flex; align-items: center; text-align: center; }
.rtray { gap: 7px; padding-right: 9px; border-right: 1px solid #54666a; margin-right: 2px; }
.rtray > svg { width: 14px; height: 14px; }
.rtray p + p { margin-left: 5px; }
.notif { position: relative; margin-left: 8px; padding-right: 8px; }
.notif svg { width: 16px; height: 16px; }
.notif b { position: absolute; right: 0; top: 5px; width: 15px; height: 15px; border: 1px solid #8c9498; border-radius: 50%; background: #26333c; font-size: 10px; line-height: 13px; text-align: center; color: #fff; }

/* host taskbar */
.taskbar { position: relative; height: 40px; flex: none; display: flex; background: linear-gradient(90deg, #23383f, #20363f 50%, #1b2b42 75%, #1b2a42); color: #fff; font: 12px/18px "Open Sans", "Noto Sans", sans-serif; }
.startbtn { width: 48px; }
.startbtn svg { width: 17px; height: 17px; }
.hsearch { width: 344px; display: flex; align-items: center; gap: 11px; padding-left: 11px; border: 1px solid #c4c4c4; background: #f2f2f2; color: #222; }
.hsearch svg { width: 17px; height: 17px; }
.hsearch input { flex: 1; border: 0; padding: 0; background: none; font-size: 14px; }
.hsearch input::placeholder { color: #333; }
.apps { display: flex; }
.app { width: 49px; display: flex; justify-content: center; }
.app svg { width: 24px; height: 24px; margin-top: 8px; }
.app .sm { width: 18px; height: 18px; margin-top: 11px; }
.app.run { background: linear-gradient(#76b9ed, #76b9ed) center bottom / 40px 2px no-repeat; }
.htray { gap: 8px; padding-right: 13px; margin-right: 4px; border-right: 1px solid #56616f; font-size: 11px; }
.htray > svg { width: 16px; height: 16px; }
.htray .w { width: 18px; height: 18px; margin-left: 3px; }
.htray .kb { width: 23px; height: 14px; margin: 0 1px 0 6px; }
.htray p + p { margin-left: 4px; }
```
